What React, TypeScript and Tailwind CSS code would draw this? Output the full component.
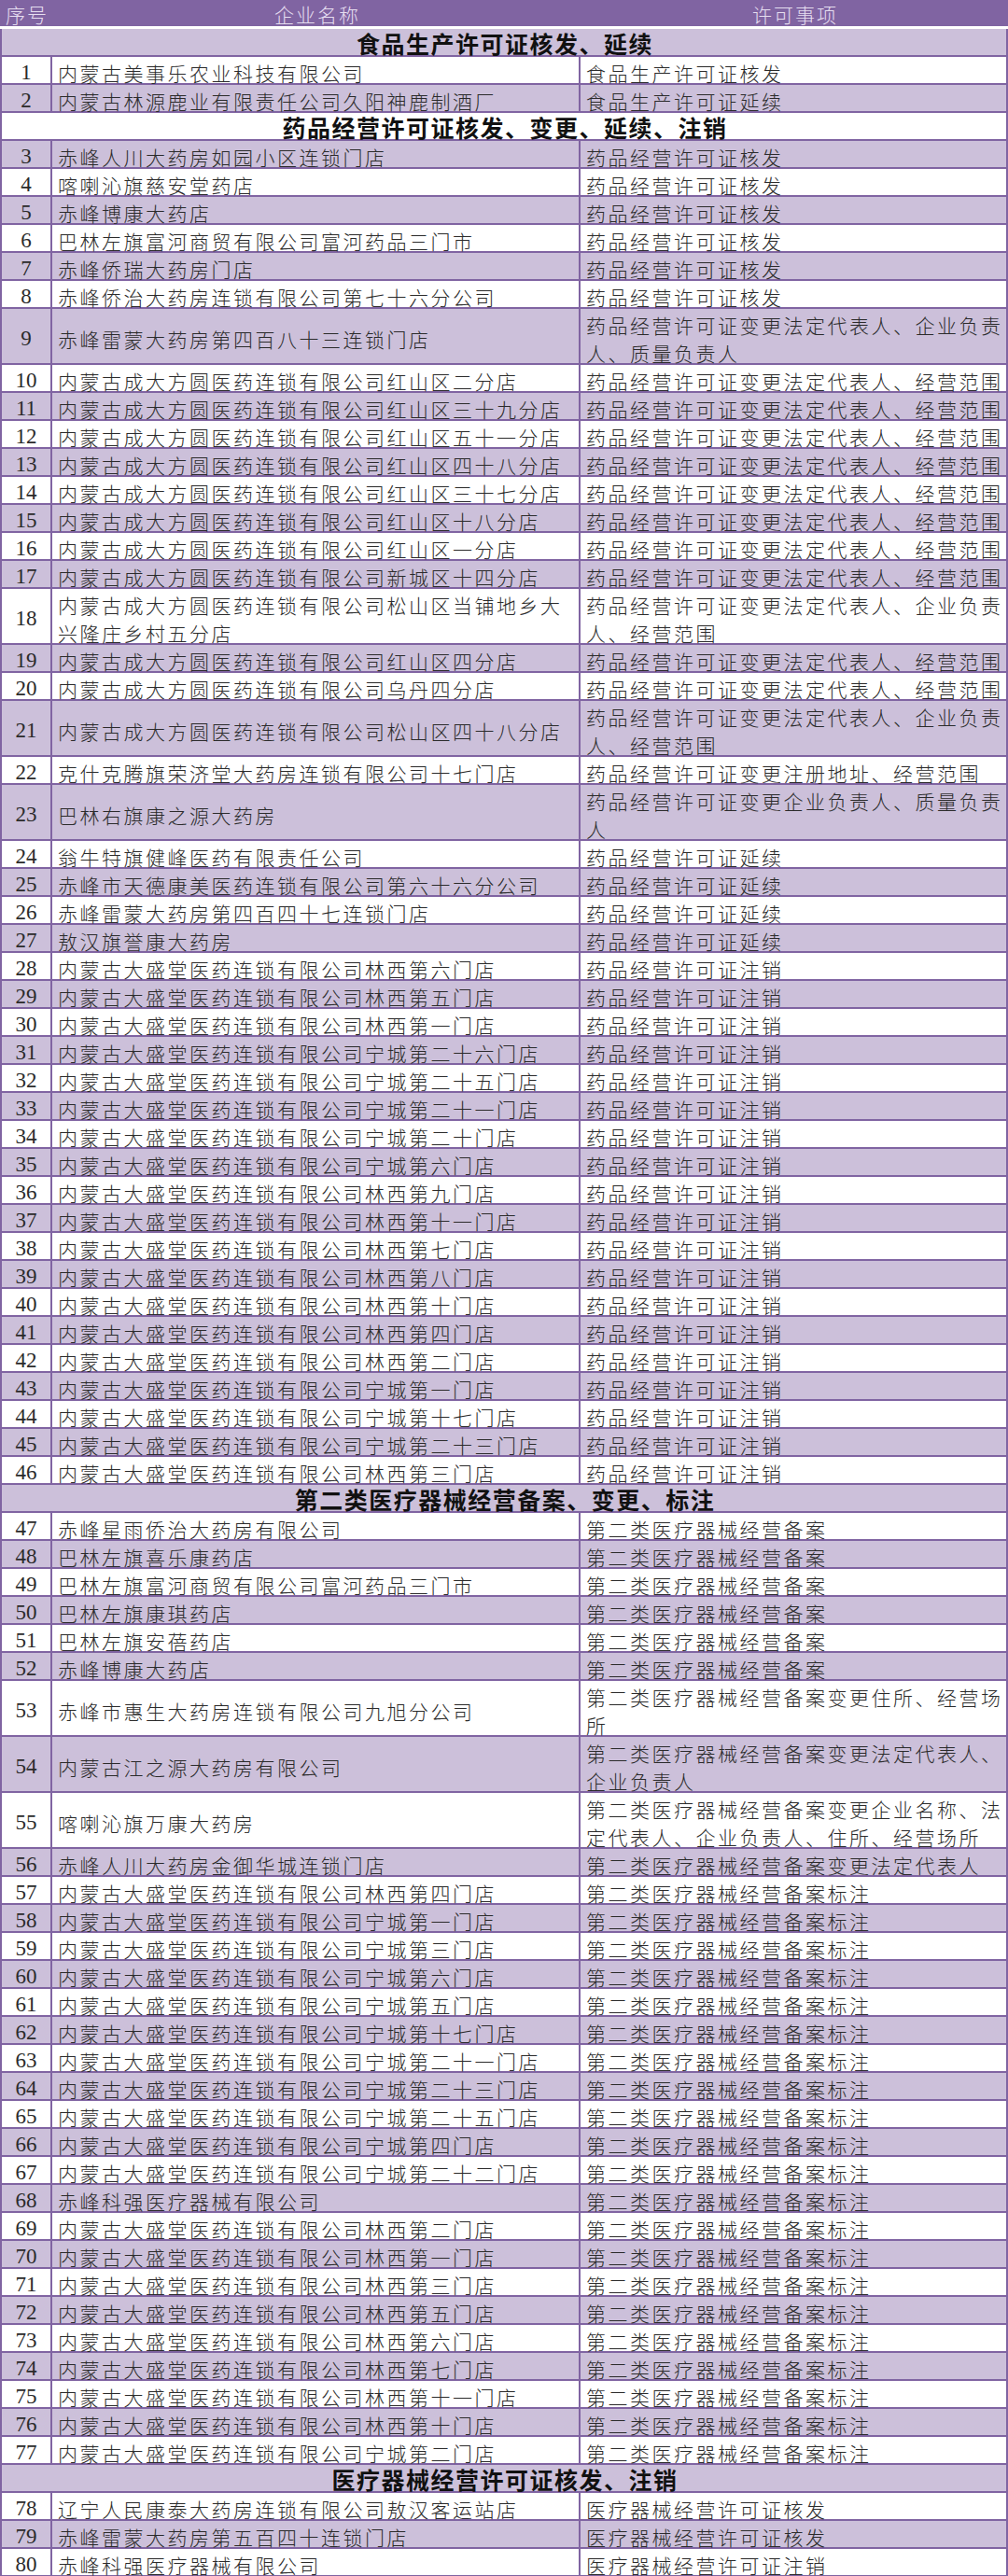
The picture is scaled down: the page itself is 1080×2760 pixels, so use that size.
import React from 'react';

type Sec = { t: 's'; title: string };
type R = { t: 'r'; n: number; name: string[]; item: string[] };
type Item = Sec | R;

const DS = '内蒙古大盛堂医药连锁有限公司';
const CD = '内蒙古成大方圆医药连锁有限公司';
const YP_ZX = '药品经营许可证注销';
const YP_FW = '药品经营许可证变更法定代表人、经营范围';
const BZ = '第二类医疗器械经营备案标注';
const BA = '第二类医疗器械经营备案';

const s = (title: string): Sec => ({ t: 's', title });
const r = (n: number, name: string | string[], item: string | string[]): R => ({
  t: 'r',
  n,
  name: Array.isArray(name) ? name : [name],
  item: Array.isArray(item) ? item : [item],
});

const items: Item[] = [
  s('食品生产许可证核发、延续'),
  r(1, '内蒙古美事乐农业科技有限公司', '食品生产许可证核发'),
  r(2, '内蒙古林源鹿业有限责任公司久阳神鹿制酒厂', '食品生产许可证延续'),
  s('药品经营许可证核发、变更、延续、注销'),
  r(3, '赤峰人川大药房如园小区连锁门店', '药品经营许可证核发'),
  r(4, '喀喇沁旗慈安堂药店', '药品经营许可证核发'),
  r(5, '赤峰博康大药店', '药品经营许可证核发'),
  r(6, '巴林左旗富河商贸有限公司富河药品三门市', '药品经营许可证核发'),
  r(7, '赤峰侨瑞大药房门店', '药品经营许可证核发'),
  r(8, '赤峰侨治大药房连锁有限公司第七十六分公司', '药品经营许可证核发'),
  r(9, '赤峰雷蒙大药房第四百八十三连锁门店', ['药品经营许可证变更法定代表人、企业负责', '人、质量负责人']),
  r(10, CD + '红山区二分店', YP_FW),
  r(11, CD + '红山区三十九分店', YP_FW),
  r(12, CD + '红山区五十一分店', YP_FW),
  r(13, CD + '红山区四十八分店', YP_FW),
  r(14, CD + '红山区三十七分店', YP_FW),
  r(15, CD + '红山区十八分店', YP_FW),
  r(16, CD + '红山区一分店', YP_FW),
  r(17, CD + '新城区十四分店', YP_FW),
  r(18, [CD + '松山区当铺地乡大', '兴隆庄乡村五分店'], ['药品经营许可证变更法定代表人、企业负责', '人、经营范围']),
  r(19, CD + '红山区四分店', YP_FW),
  r(20, CD + '乌丹四分店', YP_FW),
  r(21, CD + '松山区四十八分店', ['药品经营许可证变更法定代表人、企业负责', '人、经营范围']),
  r(22, '克什克腾旗荣济堂大药房连锁有限公司十七门店', '药品经营许可证变更注册地址、经营范围'),
  r(23, '巴林右旗康之源大药房', ['药品经营许可证变更企业负责人、质量负责', '人']),
  r(24, '翁牛特旗健峰医药有限责任公司', '药品经营许可证延续'),
  r(25, '赤峰市天德康美医药连锁有限公司第六十六分公司', '药品经营许可证延续'),
  r(26, '赤峰雷蒙大药房第四百四十七连锁门店', '药品经营许可证延续'),
  r(27, '敖汉旗誉康大药房', '药品经营许可证延续'),
  r(28, DS + '林西第六门店', YP_ZX),
  r(29, DS + '林西第五门店', YP_ZX),
  r(30, DS + '林西第一门店', YP_ZX),
  r(31, DS + '宁城第二十六门店', YP_ZX),
  r(32, DS + '宁城第二十五门店', YP_ZX),
  r(33, DS + '宁城第二十一门店', YP_ZX),
  r(34, DS + '宁城第二十门店', YP_ZX),
  r(35, DS + '宁城第六门店', YP_ZX),
  r(36, DS + '林西第九门店', YP_ZX),
  r(37, DS + '林西第十一门店', YP_ZX),
  r(38, DS + '林西第七门店', YP_ZX),
  r(39, DS + '林西第八门店', YP_ZX),
  r(40, DS + '林西第十门店', YP_ZX),
  r(41, DS + '林西第四门店', YP_ZX),
  r(42, DS + '林西第二门店', YP_ZX),
  r(43, DS + '宁城第一门店', YP_ZX),
  r(44, DS + '宁城第十七门店', YP_ZX),
  r(45, DS + '宁城第二十三门店', YP_ZX),
  r(46, DS + '林西第三门店', YP_ZX),
  s('第二类医疗器械经营备案、变更、标注'),
  r(47, '赤峰星雨侨治大药房有限公司', BA),
  r(48, '巴林左旗喜乐康药店', BA),
  r(49, '巴林左旗富河商贸有限公司富河药品三门市', BA),
  r(50, '巴林左旗康琪药店', BA),
  r(51, '巴林左旗安蓓药店', BA),
  r(52, '赤峰博康大药店', BA),
  r(53, '赤峰市惠生大药房连锁有限公司九旭分公司', ['第二类医疗器械经营备案变更住所、经营场', '所']),
  r(54, '内蒙古江之源大药房有限公司', ['第二类医疗器械经营备案变更法定代表人、', '企业负责人']),
  r(55, '喀喇沁旗万康大药房', ['第二类医疗器械经营备案变更企业名称、法', '定代表人、企业负责人、住所、经营场所']),
  r(56, '赤峰人川大药房金御华城连锁门店', '第二类医疗器械经营备案变更法定代表人'),
  r(57, DS + '林西第四门店', BZ),
  r(58, DS + '宁城第一门店', BZ),
  r(59, DS + '宁城第三门店', BZ),
  r(60, DS + '宁城第六门店', BZ),
  r(61, DS + '宁城第五门店', BZ),
  r(62, DS + '宁城第十七门店', BZ),
  r(63, DS + '宁城第二十一门店', BZ),
  r(64, DS + '宁城第二十三门店', BZ),
  r(65, DS + '宁城第二十五门店', BZ),
  r(66, DS + '宁城第四门店', BZ),
  r(67, DS + '宁城第二十二门店', BZ),
  r(68, '赤峰科强医疗器械有限公司', BZ),
  r(69, DS + '林西第二门店', BZ),
  r(70, DS + '林西第一门店', BZ),
  r(71, DS + '林西第三门店', BZ),
  r(72, DS + '林西第五门店', BZ),
  r(73, DS + '林西第六门店', BZ),
  r(74, DS + '林西第七门店', BZ),
  r(75, DS + '林西第十一门店', BZ),
  r(76, DS + '林西第十门店', BZ),
  r(77, DS + '宁城第二门店', BZ),
  s('医疗器械经营许可证核发、注销'),
  r(78, '辽宁人民康泰大药房连锁有限公司敖汉客运站店', '医疗器械经营许可证核发'),
  r(79, '赤峰雷蒙大药房第五百四十连锁门店', '医疗器械经营许可证核发'),
  r(80, '赤峰科强医疗器械有限公司', '医疗器械经营许可证注销'),
];

export default function App() {
  return (
    <div className="w-[1080px] bg-white font-['Noto_Sans_CJK_SC',sans-serif] text-[#2b2b2b]">
      <div className="flex h-[31px] items-center border-b-[3px] border-white bg-[#8064a2] pt-[4px] text-[21px] font-light tracking-[2px] text-[#e6def0]">
        <div className="w-[56px] pl-[2px] text-center">序号</div>
        <div className="w-[566px] pl-[2px] text-center">企业名称</div>
        <div className="flex-1 pl-[2px] text-center">许可事项</div>
      </div>
      <div className="border-x-2 border-[#8064a2]">
        {items.map((it, i) => {
          const bg = i % 2 === 0 ? 'bg-[#ccc0da]' : 'bg-white';
          if (it.t === 's') {
            return (
              <div
                key={i}
                className={`flex h-[30px] items-center justify-center border-b-2 border-[#8064a2] pl-[2px] pt-[4px] text-[25px] font-semibold tracking-[1.5px] text-[#111] ${bg}`}
              >
                {it.title}
              </div>
            );
          }
          const dbl = it.name.length > 1 || it.item.length > 1;
          return (
            <div key={i} className={`flex border-b-2 border-[#8064a2] ${dbl ? 'h-[60px]' : 'h-[30px]'} ${bg}`}>
              <div className="flex w-[52px] items-center justify-center pt-[6px] font-['Liberation_Serif',serif] text-[23px]">
                {it.n}
              </div>
              <div className="flex w-[566px] flex-col justify-center border-l-2 border-[#8064a2] pl-[6px] pt-[6px] text-[21px] font-light leading-[30px] tracking-[2.5px]">
                {it.name.map((l, j) => (
                  <div key={j} className="whitespace-nowrap">
                    {l}
                  </div>
                ))}
              </div>
              <div className="flex flex-1 flex-col justify-center border-l-2 border-[#8064a2] pl-[6px] pt-[6px] text-[21px] font-light leading-[30px] tracking-[2.5px]">
                {it.item.map((l, j) => (
                  <div key={j} className="whitespace-nowrap">
                    {l}
                  </div>
                ))}
              </div>
            </div>
          );
        })}
      </div>
    </div>
  );
}
